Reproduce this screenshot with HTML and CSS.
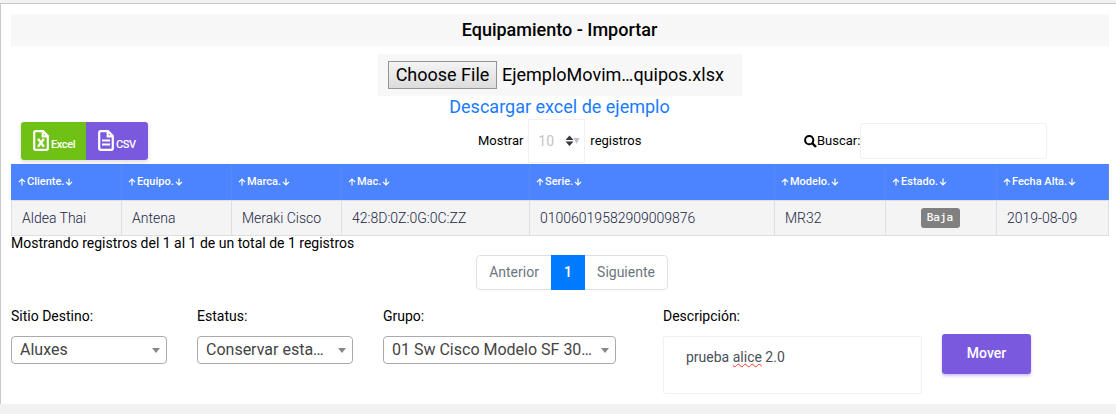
FILE: index.html
```html
<!DOCTYPE html>
<html lang="es">
<head>
<meta charset="utf-8">
<title>Equipamiento - Importar</title>
<link rel="stylesheet" href="styles.css">
</head>
<body>
<svg width="0" height="0" class="defs">
  <defs>
    <symbol id="up" viewBox="0 0 8 8"><path d="M4 7.6V1.2M.9 4.2L4 1.1L7.1 4.2" fill="none" stroke="currentColor" stroke-width="1.2"/></symbol>
    <symbol id="down" viewBox="0 0 8 8"><path d="M4 .4V6.8M.9 3.8L4 6.9L7.1 3.8" fill="none" stroke="currentColor" stroke-width="1.2"/></symbol>
  </defs>
</svg>
<main class="panel">
  <h1 class="title">Equipamiento - Importar</h1>
  <section class="upload">
    <div class="file"><button class="choose">Choose File</button><span>EjemploMovim…quipos.xlsx</span></div>
    <a class="download">Descargar excel de ejemplo</a>
  </section>
  <section class="toolbar">
    <div class="exports">
      <button class="export excel">
        <svg width="16" height="21" viewBox="0 0 16 21"><path d="M2.5 1.2H10L14.8 6V18.3Q14.8 19.8 13.3 19.8H2.7Q1.2 19.8 1.2 18.3V2.5Q1.2 1.2 2.5 1.2ZM9.7 1.5V6.3H14.5" fill="none" stroke="#fff" stroke-width="2.2"/><path d="M5.4 9.2L10.6 16.2M10.6 9.2L5.4 16.2" fill="none" stroke="#fff" stroke-width="2.3"/><path d="M4.3 9.2h2.8M9 9.2h2.6M4.3 16.2h2.8M9 16.2h2.6" stroke="#fff" stroke-width="1"/></svg><span>Excel</span>
      </button>
      <button class="export csv">
        <svg width="16" height="21" viewBox="0 0 16 21"><path d="M2.5 1.2H10L14.8 6V18.3Q14.8 19.8 13.3 19.8H2.7Q1.2 19.8 1.2 18.3V2.5Q1.2 1.2 2.5 1.2ZM9.7 1.5V6.3H14.5" fill="none" stroke="#fff" stroke-width="2.2"/><path d="M4 10.5H12M4 14.5H12" stroke="#fff" stroke-width="2"/></svg><span>CSV</span>
      </button>
    </div>
    <label class="length">Mostrar
      <span class="count">10
        <svg width="15" height="12" viewBox="0 0 15 12"><path d="M4.5 0.6L8.5 5H.5ZM.5 6.6H8.5L4.5 11Z" fill="#343a40"/><path d="M8.6 3H14.6L11.6 8.8Z" fill="#bfc0c2"/></svg>
      </span>
      registros</label>
    <label class="search"><svg width="13" height="13" viewBox="0 0 13 13"><circle cx="5.2" cy="5.2" r="4.1" fill="none" stroke="#000" stroke-width="2"/><path d="M8.2 8.2L12 12" stroke="#000" stroke-width="2.4"/></svg>Buscar:<input class="query"></label>
  </section>
  <table class="grid">
    <colgroup><col class="c1"><col class="c2"><col class="c3"><col class="c4"><col class="c5"><col class="c6"><col class="c7"><col class="c8"></colgroup>
    <thead><tr>
      <th><svg><use href="#up"/></svg>Cliente.<svg><use href="#down"/></svg></th>
      <th><svg><use href="#up"/></svg>Equipo.<svg><use href="#down"/></svg></th>
      <th><svg><use href="#up"/></svg>Marca.<svg><use href="#down"/></svg></th>
      <th><svg><use href="#up"/></svg>Mac.<svg><use href="#down"/></svg></th>
      <th><svg><use href="#up"/></svg>Serie.<svg><use href="#down"/></svg></th>
      <th><svg><use href="#up"/></svg>Modelo.<svg><use href="#down"/></svg></th>
      <th><svg><use href="#up"/></svg>Estado.<svg><use href="#down"/></svg></th>
      <th><svg><use href="#up"/></svg>Fecha Alta.<svg><use href="#down"/></svg></th>
    </tr></thead>
    <tbody><tr>
      <td>Aldea Thai</td><td>Antena</td><td>Meraki Cisco</td><td>42:8D:0Z:0G:0C:ZZ</td><td>01006019582909009876</td><td>MR32</td><td class="state"><span class="badge">Baja</span></td><td>2019-08-09</td>
    </tr></tbody>
  </table>
  <p class="info">Mostrando registros del 1 al 1 de un total de 1 registros</p>
  <nav class="pages"><span class="prev">Anterior</span><span class="current">1</span><span class="next">Siguiente</span></nav>
  <section class="form">
    <div class="field site"><span>Sitio Destino:</span><div class="select">Aluxes</div></div>
    <div class="field status"><span>Estatus:</span><div class="select">Conservar esta…</div></div>
    <div class="field group"><span>Grupo:</span><div class="select">01 Sw Cisco Modelo SF 30…</div></div>
    <div class="field desc"><span>Descripción:</span><div class="area">prueba <span class="typo">alice</span> 2.0</div></div>
    <button class="move">Mover</button>
  </section>
</main>
</body>
</html>
```
FILE: styles.css
```css
* { box-sizing: border-box; }
body { margin: 0; padding-top: 3px; height: 414px; overflow: hidden; background: #f2f2f2; font: 14px/20px Roboto, sans-serif; color: #000; }
button, input { font-family: inherit; margin: 0; }
.defs { position: absolute; }
.panel { height: 401px; background: #fff; border: solid #c8c8c8; border-width: 1px 0 0 1px; padding: 10px 7px 0 10px; }
.title { margin: 0; height: 32px; background: #f7f7f7; font-size: 18px; line-height: 32px; font-weight: 500; text-align: center; padding-right: 1px; }
.upload { display: flex; flex-direction: column; align-items: center; padding-top: 8px; height: 105px; margin-bottom: -32px; }
.file { width: 364px; height: 42px; background: #f7f7f7; display: flex; align-items: center; padding-left: 10px; gap: 5px; font-size: 18px; white-space: nowrap; }
.choose { width: 109px; height: 28px; padding: 0; border: 1px solid #949494; background: linear-gradient(#f4f4f4, #dcdcdc); font-size: 18px; line-height: 24px; color: #000; }
.download { color: #1a7bff; font-size: 18px; line-height: 22px; padding-right: 1px; }
.toolbar { display: flex; height: 45px; }
.exports { display: flex; margin: 3px 0 0 10px; width: 127px; height: 38px; border-radius: 3px; box-shadow: 0 2px 4px rgba(0,0,0,.14); }
.export { display: flex; align-items: flex-start; gap: 2px; border: 0; padding: 8px 0 0 12px; color: #fff; font-size: 11px; font-weight: 500; line-height: 13px; letter-spacing: -.4px; }
.export span { padding-top: 8px; }
.excel { width: 65px; background: #6fc116; border-radius: 3px 0 0 3px; }
.csv { width: 62px; background: #7b59df; border-radius: 0 3px 3px 0; }
.length { display: flex; align-items: center; margin-left: 330px; width: 170px; height: 44px; font-size: 13px; }
.count { display: flex; align-items: center; justify-content: space-between; width: 57px; height: 44px; border: 1px solid #f1f1f1; margin: 0 5px 0 5px; padding: 0 4px 0 9px; color: #c4c4c4; font-size: 14px; }
.search { display: flex; align-items: center; margin-left: 156px; height: 44px; font-size: 13px; }
.query { width: 187px; height: 36px; border: 1px solid #f1f1f1; border-radius: 3px; }
.grid { width: 1098px; border-collapse: separate; border-spacing: 0; table-layout: fixed; }
.c1 { width: 111px; }
.c2, .c3 { width: 110px; }
.c4 { width: 188px; }
.c5 { width: 245px; }
.c6, .c7 { width: 111px; }
.c8 { width: 112px; }
th { height: 36px; padding: 0 0 0 5px; background: #4c83ff; color: #fff; border-right: 1px solid #5b88ed; font-size: 11px; font-weight: 500; text-align: left; white-space: nowrap; line-height: 16px; }
th:first-child { padding-left: 6px; }
th svg { width: 8px; height: 8px; vertical-align: -1px; margin: 0 1px; }
td { height: 36px; padding: 0 0 1px 10px; background: #f4f4f4; border: solid #dfdfdf; border-width: 1px 1px 1px 0; font-weight: 300; color: #212545; white-space: nowrap; }
td:first-child { border-left: 1px solid #dfdfdf; }
td.state { padding: 0 2px 1px 0; text-align: center; }
.badge { display: inline-block; width: 39px; height: 20px; border-radius: 3px; background: #808080; color: #fff; font: 11px/20px "DejaVu Sans Mono", monospace; vertical-align: middle; -webkit-text-stroke: .2px #fff; }
.info { margin: 0; height: 19px; line-height: 15px; }
.pages { display: flex; width: 192px; height: 35px; margin-left: 465px; border: 1px solid #dee2e6; border-radius: 4px; color: #6c757d; line-height: 33px; text-align: center; }
.prev { width: 74px; }
.current { width: 34px; margin: -1px 0; line-height: 35px; background: #007bff; color: #fff; font-weight: 500; }
.next { flex: 1; }
.form { display: flex; align-items: flex-start; padding-top: 16px; }
.field { display: flex; flex-direction: column; gap: 10px; }
.site, .status { width: 156px; margin-right: 30px; }
.group { width: 233px; margin-right: 47px; }
.desc { width: 259px; margin-right: 20px; }
.select { display: flex; align-items: center; justify-content: space-between; height: 28px; border: 1px solid #aaa; border-radius: 4px; padding: 0 6px 0 8px; font-size: 16px; color: #444; white-space: nowrap; }
.select::after { content: ""; border: solid transparent; border-width: 5px 4px 0; border-top-color: #888; }
.area { height: 58px; border: 1px solid #f1f1f1; border-radius: 2px; padding: 10px 22px; color: #495057; }
.typo { text-decoration: underline wavy #f33 1px; text-underline-offset: 1px; text-decoration-skip-ink: none; }
.move { width: 89px; height: 40px; margin-top: 28px; border: 0; padding: 0 0 2px; border-radius: 3px; background: #7b59df; color: #fff; font-size: 14px; font-weight: 500; box-shadow: 0 2px 3px rgba(123,89,223,.35); }
```
